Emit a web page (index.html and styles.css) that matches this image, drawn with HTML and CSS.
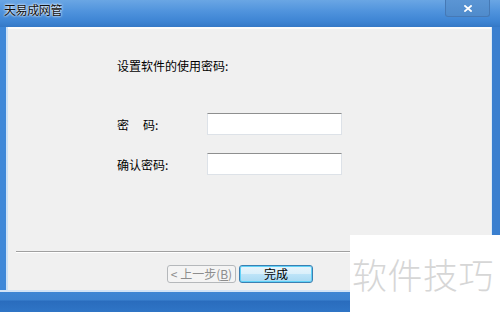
FILE: index.html
```html
<!DOCTYPE html>
<html>
<head>
<meta charset="utf-8">
<link rel="stylesheet" href="styles.css">
</head>
<body>
<div class="window">
  <div class="titlebar">
    <span class="title">天易成网管</span>
    <div class="close">
      <svg width="8" height="7" viewBox="0 0 8 7"><path d="M1 1 L7 6 M7 1 L1 6" stroke="#fff" stroke-width="1.8" stroke-linecap="square"/></svg>
    </div>
  </div>
  <div class="frame">
    <div class="client">
      <div class="form">
        <p class="heading">设置软件的使用密码:</p>
        <div class="row row-first">
          <span class="label"><span class="wide">密</span>码:</span>
          <span class="input"></span>
        </div>
        <div class="row">
          <span class="label">确认密码:</span>
          <span class="input"></span>
        </div>
      </div>
      <div class="sep"></div>
      <div class="buttons">
        <span class="btn btn-disabled">&lt; 上一步(<u>B</u>)</span>
        <span class="btn btn-default">完成</span>
      </div>
    </div>
  </div>
  <div class="bottom"></div>
  <div class="watermark">软件技巧</div>
</div>
</body>
</html>
```

FILE: styles.css
```css
* { box-sizing: border-box; }
html, body { margin: 0; padding: 0; }
body {
  width: 500px;
  height: 312px;
  overflow: hidden;
  font-family: "Noto Sans CJK SC", "Liberation Sans", sans-serif;
  font-size: 12px;
  color: #000;
}
.window {
  position: relative;
  width: 500px;
  height: 312px;
  display: flex;
  flex-direction: column;
  background: linear-gradient(90deg, #3f88d8 0%, #3b83d4 60%, #3a7fcf 100%);
}
.titlebar {
  height: 27px;
  display: flex;
  align-items: flex-start;
  justify-content: space-between;
  background: linear-gradient(180deg, #6aa6e4 0%, #4e92dc 45%, #3d84d3 80%, #3478c6 100%);
}
.title {
  margin: 2px 0 0 4px;
  line-height: 16px;
  font-size: 12px;
  color: #111;
  text-shadow: 0 0 3px #fff, 0 0 2px #fff;
  letter-spacing: -0.4px;
}
.close {
  width: 45px;
  height: 17px;
  margin-right: 10px;
  display: flex;
  align-items: center;
  justify-content: center;
  background: linear-gradient(180deg, #5b95d4 0%, #4f8bcc 100%);
  border: 1px solid #4679b5;
  border-top: none;
  border-radius: 0 0 3px 3px;
}
.frame {
  display: flex;
  padding: 0 9px 0 8px;
}
.client {
  flex: 1;
  height: 263px;
  display: flex;
  flex-direction: column;
  background: #f0f0f0;
  border-top: 2px solid #fbfbfb;
  box-shadow: -2px 0 0 #cfe2f5, 1px 0 0 #dbe9f6;
}
.form {
  padding-left: 109px;
}
.heading {
  margin: 29px 0 0 0;
  line-height: 16px;
}
.row {
  display: flex;
  align-items: center;
  height: 22px;
  margin-top: 18px;
}
.row-first { margin-top: 39px; }
.label {
  width: 90px;
  line-height: 16px;
  padding-top: 1px;
}
.wide { margin-right: 14px; }
.input {
  width: 135px;
  height: 22px;
  background: #fff;
  border: 1px solid #dde2e8;
  border-top-color: #8e8f8f;
}
.sep {
  margin: auto 8px 0 8px;
  height: 2px;
  border-top: 1px solid #a0a0a0;
  border-bottom: 1px solid #fff;
}
.buttons {
  display: flex;
  gap: 3px;
  padding-left: 159px;
  margin: 12px 0 7px 0;
}
.btn {
  height: 18px;
  display: flex;
  align-items: center;
  justify-content: center;
  border-radius: 3px;
  line-height: 14px;
}
.btn-disabled {
  width: 69px;
  color: #8d8d8d;
  background: #f4f4f4;
  border: 1px solid #b5b8bb;
}
.btn-disabled u { text-decoration: underline; }
.btn-default {
  width: 74px;
  background: linear-gradient(180deg, #e8f5fc 0%, #d9effa 50%, #bde4f8 51%, #a9d9f2 100%);
  border: 1px solid #3c7fb1;
  box-shadow: inset 0 0 0 1px #5fd2f8;
}
.bottom {
  flex: 1;
  border-top: 2px solid #d2e4f6;
  background: linear-gradient(180deg, #3d86d4 0%, #3b82d0 40%, #2a6cbd 45%, #2f75c6 100%);
}
.watermark {
  position: absolute;
  left: 350px;
  top: 235px;
  width: 150px;
  height: 77px;
  background: #fff;
  color: #d6d6d6;
  font-size: 35px;
  font-weight: 300;
  line-height: 40px;
  padding: 19px 0 0 2px;
  letter-spacing: 0.5px;
  white-space: nowrap;
}
```
